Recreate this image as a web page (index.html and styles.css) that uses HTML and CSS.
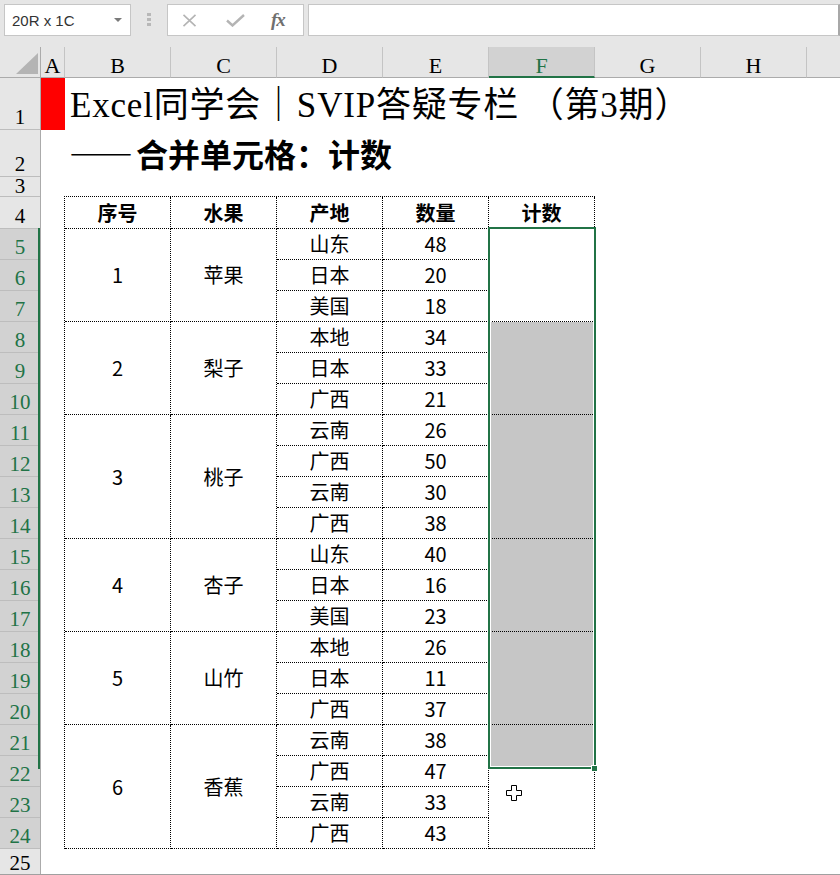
FILE: index.html
```html
<!DOCTYPE html>
<html lang="zh-CN">
<head>
<meta charset="utf-8">
<title>Excel</title>
<link rel="stylesheet" href="styles.css">
</head>
<body>
<div class="app">
  <div class="toolbar">
    <div class="namebox"><span>20R x 1C</span><span class="caret"></span></div>
    <div class="grip"><i></i><i></i><i></i></div>
    <div class="fxbox">
      <svg class="ico-x" width="15" height="13" viewBox="0 0 15 13"><path d="M1.5 0.8 L13.5 12.2 M13.5 0.8 L1.5 12.2" stroke="#b4b4b4" stroke-width="1.6" fill="none"/></svg>
      <svg class="ico-ok" width="19" height="13" viewBox="0 0 19 13"><path d="M1 6.5 L6.5 11.5 L18 1" stroke="#b4b4b4" stroke-width="2.4" fill="none"/></svg>
      <span class="fx">fx</span>
    </div>
    <div class="formula"></div>
  </div>

  <div class="sheet">
    <div class="corner"><span class="tri"></span></div>
    <div class="colheads">
      <div class="ch cA">A</div>
      <div class="ch">B</div>
      <div class="ch">C</div>
      <div class="ch">D</div>
      <div class="ch">E</div>
      <div class="ch sel">F</div>
      <div class="ch">G</div>
      <div class="ch">H</div>
      <div class="ch rest"></div>
    </div>
    <div class="rowheads">
      <div class="rh h52">1</div>
      <div class="rh h47">2</div>
      <div class="rh h20">3</div>
      <div class="rh h32">4</div>
      <div class="rh sel">5</div>
      <div class="rh sel">6</div>
      <div class="rh sel">7</div>
      <div class="rh sel">8</div>
      <div class="rh sel">9</div>
      <div class="rh sel">10</div>
      <div class="rh sel">11</div>
      <div class="rh sel">12</div>
      <div class="rh sel">13</div>
      <div class="rh sel">14</div>
      <div class="rh sel">15</div>
      <div class="rh sel">16</div>
      <div class="rh sel">17</div>
      <div class="rh sel">18</div>
      <div class="rh sel">19</div>
      <div class="rh sel">20</div>
      <div class="rh sel">21</div>
      <div class="rh sel">22</div>
      <div class="rh sel">23</div>
      <div class="rh sel">24</div>
      <div class="rh last">25</div>
      <span class="selbar"></span>
    </div>
    <div class="body">
      <div class="r1"><div class="red"></div><div class="title">Excel同学会｜SVIP答疑专栏 （第3期）</div></div>
      <div class="r2"><div class="subtitle"><span class="dash">——</span>合并单元格：计数</div></div>
      <div class="r3"></div>
      <div class="tbl">
        <div class="c hd">序号</div><div class="c hd">水果</div><div class="c hd">产地</div><div class="c hd">数量</div><div class="c hd">计数</div>

        <div class="c s3">1</div><div class="c s3">苹果</div><div class="c">山东</div><div class="c">48</div><div class="c s3"></div>
        <div class="c">日本</div><div class="c">20</div>
        <div class="c">美国</div><div class="c">18</div>

        <div class="c s3">2</div><div class="c s3">梨子</div><div class="c">本地</div><div class="c">34</div><div class="c s3 grey"></div>
        <div class="c">日本</div><div class="c">33</div>
        <div class="c">广西</div><div class="c">21</div>

        <div class="c s4">3</div><div class="c s4">桃子</div><div class="c">云南</div><div class="c">26</div><div class="c s4 grey"></div>
        <div class="c">广西</div><div class="c">50</div>
        <div class="c">云南</div><div class="c">30</div>
        <div class="c">广西</div><div class="c">38</div>

        <div class="c s3">4</div><div class="c s3">杏子</div><div class="c">山东</div><div class="c">40</div><div class="c s3 grey"></div>
        <div class="c">日本</div><div class="c">16</div>
        <div class="c">美国</div><div class="c">23</div>

        <div class="c s3">5</div><div class="c s3">山竹</div><div class="c">本地</div><div class="c">26</div><div class="c s3 grey"></div>
        <div class="c">日本</div><div class="c">11</div>
        <div class="c">广西</div><div class="c">37</div>

        <div class="c s4">6</div><div class="c s4">香蕉</div><div class="c">云南</div><div class="c">38</div><div class="c s4 partial"></div>
        <div class="c">广西</div><div class="c">47</div>
        <div class="c">云南</div><div class="c">33</div>
        <div class="c">广西</div><div class="c">43</div>

        <span class="selbox"></span>
        <span class="handle"></span>
      </div>
    </div>
  </div>

  <svg class="cursor" width="16" height="16" viewBox="0 0 16 16"><path d="M5.5 0.5 H10.5 V5.5 H15.5 V10.5 H10.5 V15.5 H5.5 V10.5 H0.5 V5.5 H5.5 Z" fill="#fff" stroke="#000" stroke-width="1"/></svg>
</div>
</body>
</html>
```
FILE: styles.css
```css
html, body {
  margin: 0;
  padding: 0;
  background: #fff;
}

.app {
  width: 840px;
  height: 875px;
  position: relative;
  overflow: hidden;
  background: #fff;
}

/* ---------- toolbar ---------- */
.toolbar {
  height: 47px;
  box-sizing: border-box;
  padding-top: 4px;
  background: #e6e6e6;
  display: flex;
  align-items: flex-start;
}

.namebox {
  margin-left: 4px;
  width: 127px;
  height: 32px;
  box-sizing: border-box;
  border: 1px solid #c6c6c6;
  background: #fff;
  display: flex;
  align-items: center;
  padding-left: 7px;
  font: 15px "Liberation Sans", Arial, sans-serif;
  color: #333;
}

.caret {
  margin-left: auto;
  margin-right: 8px;
  width: 0;
  height: 0;
  border-left: 4px solid transparent;
  border-right: 4px solid transparent;
  border-top: 4px solid #7a7a7a;
}

.grip {
  margin-left: 16px;
  margin-top: 9px;
  display: flex;
  flex-direction: column;
  gap: 2px;
}

.grip i {
  display: block;
  width: 4px;
  height: 3px;
  background: #b8b8b8;
}

.fxbox {
  margin-left: 16px;
  width: 137px;
  height: 32px;
  box-sizing: border-box;
  border: 1px solid #c6c6c6;
  background: #fff;
  display: flex;
  align-items: center;
  padding-left: 14px;
}

.ico-x { margin-top: 1px; }
.ico-ok { margin-left: 29px; margin-top: 1px; }

.fx {
  margin-left: 26px;
  font: italic 700 19px "Liberation Serif", "Times New Roman", serif;
  color: #707070;
  letter-spacing: -1px;
}

.formula {
  margin-left: 4px;
  width: 532px;
  height: 32px;
  box-sizing: border-box;
  border: 1px solid #c6c6c6;
  border-right: 2px solid #a8a8a8;
  background: #fff;
}

/* ---------- sheet ---------- */
.sheet {
  height: 828px;
  box-sizing: border-box;
  border-bottom: 1px solid #a0a0a0;
  display: grid;
  grid-template-columns: 41px 799px;
  grid-template-rows: 31px 796px;
  overflow: hidden;
}

.corner {
  background: #e6e6e6;
  border-right: 1px solid #ababab;
  border-bottom: 1px solid #ababab;
  display: flex;
  justify-content: flex-end;
  align-items: flex-end;
  padding: 0 2px 3px 0;
}

.tri {
  width: 22px;
  height: 21px;
  background: #b4b4b4;
  clip-path: polygon(100% 0, 100% 100%, 0 100%);
}

.colheads {
  display: flex;
  background: #e6e6e6;
}

.ch {
  width: 106px;
  flex: none;
  box-sizing: border-box;
  border-right: 1px solid #c4c4c4;
  border-bottom: 1px solid #ababab;
  display: flex;
  align-items: flex-end;
  justify-content: center;
  padding-bottom: 1px;
  font: 22px/21px "Liberation Serif", "Times New Roman", serif;
  color: #000;
}

.ch.cA { width: 24px; }
.ch.rest { flex: 1; border-right: none; }

.ch.sel {
  background: #d2d2d2;
  color: #217346;
  border-bottom: 2px solid #217346;
  padding-bottom: 0;
}

.rowheads {
  position: relative;
  display: flex;
  flex-direction: column;
  background: #e6e6e6;
  border-right: 1px solid #ababab;
  overflow: hidden;
}

.rh {
  height: 31px;
  flex: none;
  box-sizing: border-box;
  border-bottom: 1px solid #bdbdbd;
  display: flex;
  align-items: flex-end;
  justify-content: center;
  padding-bottom: 2px;
  font: 21px/20px "Liberation Serif", "Times New Roman", serif;
  color: #000;
}

.rh.h52 { height: 52px; }
.rh.h47 { height: 47px; }
.rh.h20 { height: 20px; padding-bottom: 1px; line-height: 18px; }
.rh.h32 { height: 32px; }

.rh.sel {
  background: #d2d2d2;
  color: #217346;
}

.rh.last {
  flex: 1;
  height: auto;
  border-bottom: none;
  padding-bottom: 0;
  line-height: 22px;
}

.selbar {
  position: absolute;
  right: 0;
  top: 150px;
  width: 2px;
  height: 541px;
  background: #217346;
}

/* ---------- body ---------- */
.body {
  position: relative;
  background: #fff;
  overflow: hidden;
}

.r1 {
  height: 52px;
  display: flex;
}

.red {
  width: 24px;
  height: 52px;
  background: #ff0000;
  flex: none;
}

.title {
  margin-left: 5px;
  align-self: flex-end;
  padding-bottom: 2px;
  font: 35px/44px "Liberation Serif", "Noto Sans CJK SC", serif;
  letter-spacing: 0.8px;
  color: #000;
  white-space: nowrap;
}

.r2 {
  height: 47px;
  display: flex;
  align-items: flex-end;
  padding-left: 28px;
}

.subtitle {
  font: 700 32px/40px "Noto Sans CJK SC", "Liberation Sans", sans-serif;
  color: #000;
  white-space: nowrap;
  padding-bottom: 4px;
}

.dash { letter-spacing: 3px; }

.r3 { height: 19px; }

.tbl {
  position: relative;
  margin-left: 23px;
  width: fit-content;
  display: grid;
  grid-template-columns: repeat(5, 106px);
  grid-template-rows: 32px repeat(20, 31px);
  border-top: 1px dotted #000;
  border-left: 1px dotted #000;
}

.c {
  box-sizing: border-box;
  border-right: 1px dotted #000;
  border-bottom: 1px dotted #000;
  display: flex;
  align-items: center;
  justify-content: center;
  font: 20px/24px "Noto Sans CJK SC", "Liberation Sans", sans-serif;
  color: #000;
}

.c.hd { font-weight: 700; }
.c.s3 { grid-row: span 3; }
.c.s4 { grid-row: span 4; }
.c.grey { background: #c6c6c6; }
.c.partial { background: linear-gradient(#c6c6c6 42px, #fff 42px); }

.selbox {
  position: absolute;
  left: 423px;
  top: 30px;
  width: 108px;
  height: 542px;
  box-sizing: border-box;
  border: 2px solid #217346;
  box-shadow: inset 0 0 0 1px #fff;
}

.handle {
  position: absolute;
  left: 526px;
  top: 568px;
  width: 7px;
  height: 7px;
  box-sizing: border-box;
  background: #217346;
  border: 1px solid #fff;
}

.cursor {
  position: absolute;
  left: 506px;
  top: 785px;
}
```
